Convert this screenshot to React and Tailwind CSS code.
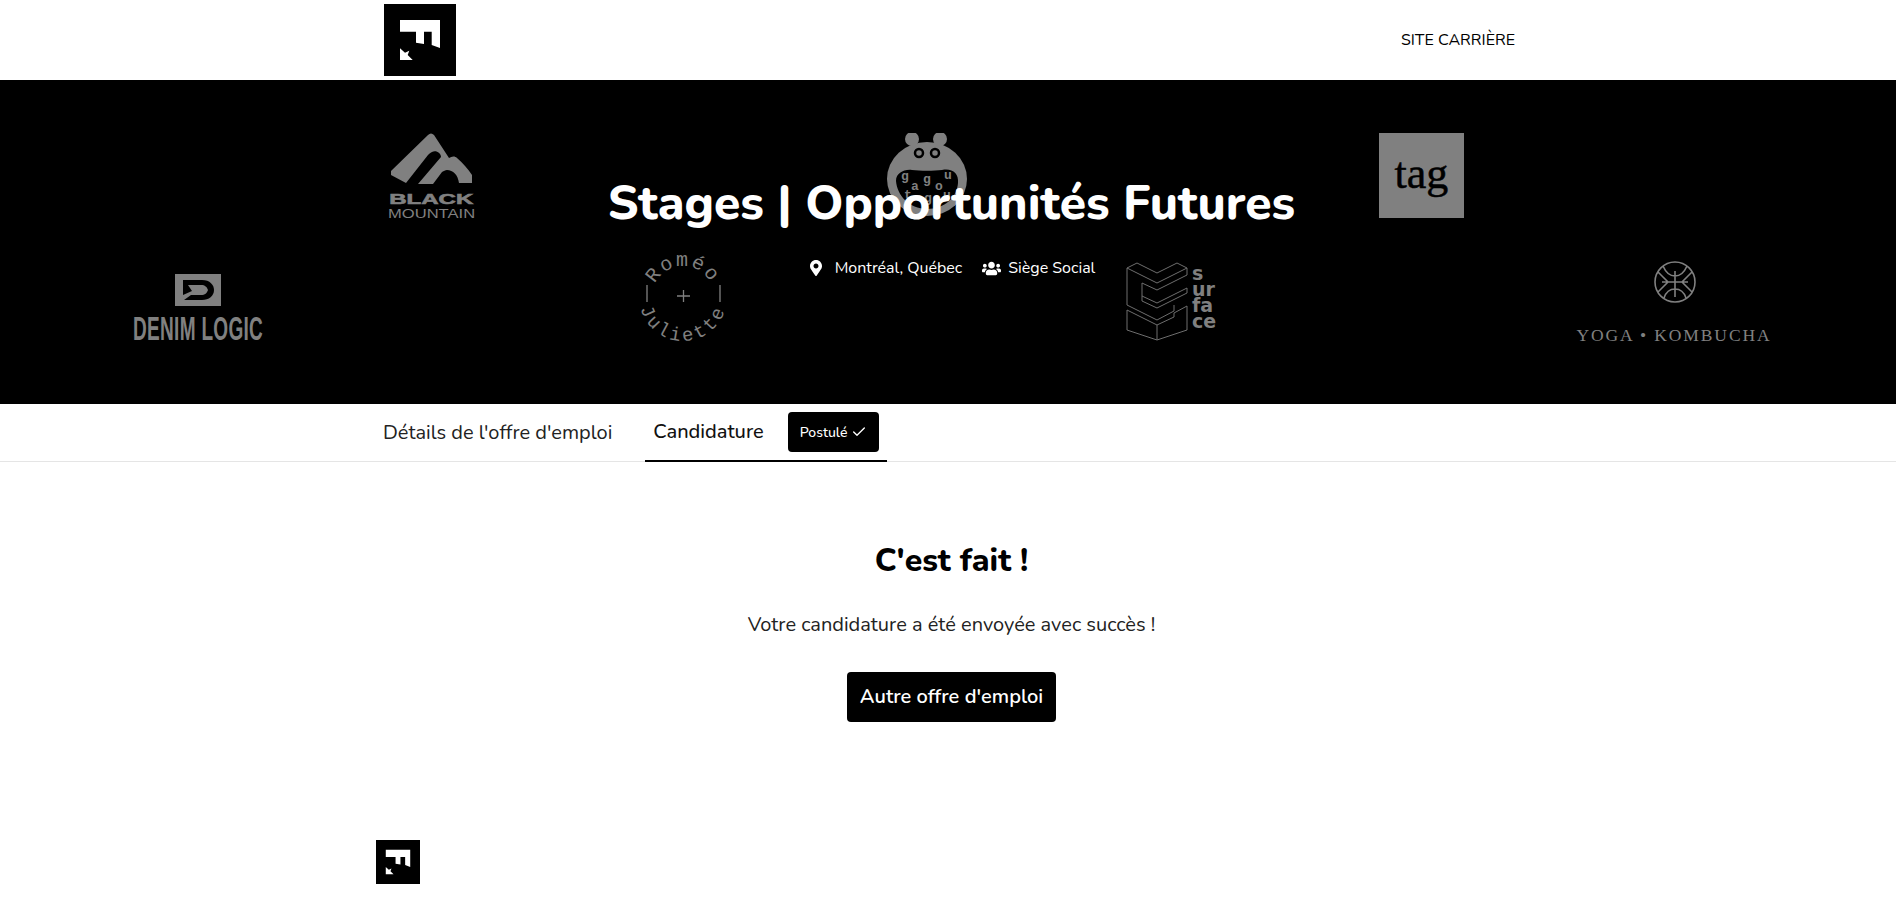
import { Check } from 'lucide-react';
import { FaMapMarkerAlt, FaUsers } from 'react-icons/fa';

const FONT = "font-['Nunito','Open_Sans','Noto_Sans',sans-serif]";

// Logo F de l'entreprise
function BrandLogo({ className }) {
  return (
    <svg viewBox="0 0 72 72" className={className}>
      <rect width="72" height="72" fill="#000" />
      <path fill="#fff" d="M16 16H56V44L47.700 41V27.700H40V40L32 38.700V27.700H16Z" />
      <path fill="#fff" d="M16 44.300L21 48.700L25.300 46.700L23.700 51L28.700 56H16Z" />
    </svg>
  );
}

function BlackMountain() {
  return (
    <div className="absolute left-[388px] top-[53px] w-[87px] flex flex-col items-center">
      <svg viewBox="0 0 81 52" className="w-[81px] h-[52px]">
        <path fill="#808080" d="M37 2C39 0 41 0 43 2L58 25C61 23 64 23 66 25C72 30 77 36 81 42V50H68C67 42 62 37 56 37C54 37 53 38 51 39L42 51H27L50 24C50 20 45 17 41 19C39 20 38 21 37 22L15 50L0 42V38Z" />
      </svg>
      <span className="mt-[7px] text-[#808080] font-['Liberation_Sans'] font-bold text-[15px] leading-[14px] [-webkit-text-stroke:0.6px_#808080] [transform:scaleX(1.6)]">BLACK</span>
      <span className="mt-[2px] text-[#808080] font-['Liberation_Sans'] text-[12px] leading-[12px] [transform:scaleX(1.38)]">MOUNTAIN</span>
    </div>
  );
}

function Hippo() {
  return (
    <svg viewBox="0 0 80 86" className="absolute left-[887px] top-[53px] w-[80px] h-[86px]">
      <circle cx="25" cy="6" r="7" fill="#808080" />
      <circle cx="53" cy="6" r="7" fill="#808080" />
      <ellipse cx="40" cy="46" rx="40" ry="37" fill="#808080" />
      <circle cx="32" cy="20" r="4" fill="none" stroke="#000" strokeWidth="2.500" />
      <circle cx="48" cy="20" r="4" fill="none" stroke="#000" strokeWidth="2.500" />
      <path fill="#000" d="M9 48C9 40 17 36 25 37C33 38 47 38 55 37C65 35 72 40 71 50C70 64 58 76 40 76C22 76 10 62 9 48Z" />
      <g fill="#808080" fontFamily="Liberation Mono" fontWeight="700" fontSize="13" textAnchor="middle">
        <text x="18" y="47">g</text>
        <text x="28" y="57">a</text>
        <text x="40" y="50">g</text>
        <text x="52" y="57">o</text>
        <text x="61" y="46">u</text>
        <text x="21" y="66">t</text>
        <text x="41" y="69">g</text>
        <text x="60" y="66">u</text>
      </g>
    </svg>
  );
}

function Tag() {
  return (
    <div className="absolute left-[1379px] top-[53px] w-[85px] h-[85px] bg-[#808080] flex items-center justify-center">
      <span className="font-['Liberation_Serif'] text-[44px] leading-none text-black -mt-[3px] [-webkit-text-stroke:0.5px_#000]">tag</span>
    </div>
  );
}

function DenimLogic() {
  return (
    <div className="absolute left-[133px] top-[194px] w-[130px] flex flex-col items-center">
      <svg viewBox="0 0 46 32" className="w-[46px] h-[32px]">
        <rect width="46" height="32" fill="#808080" />
        <path fill="#000" d="M8 6H27C35 6 39 11 39 16C39 22 34 26 27 26H9L16 21H26C30 21 32 19 33 16C32 13 30 11 26 11H13L17 17L8 21Z" />
      </svg>
      <span className="mt-[8px] font-['Liberation_Sans'] font-bold text-[#808080] text-[34px] leading-[28px] tracking-[0.5px] whitespace-nowrap [transform:scaleX(0.56)]">DENIM LOGIC</span>
    </div>
  );
}

function RomeoJuliette() {
  return (
    <svg viewBox="0 0 100 100" className="absolute left-[633px] top-[167px] w-[100px] h-[100px]">
      <defs>
        <path id="arc-top" d="M19 50A31 31 0 0 1 81 50" />
        <path id="arc-bottom" d="M6 50A44 44 0 0 0 94 50" />
      </defs>
      <g fill="#808080" fontFamily="Liberation Mono" textAnchor="middle">
        <text fontSize="20" letterSpacing="2"><textPath href="#arc-top" startOffset="50%">Roméo</textPath></text>
        <text fontSize="19" letterSpacing="3"><textPath href="#arc-bottom" startOffset="50%">Juliette</textPath></text>
      </g>
      <path stroke="#808080" strokeWidth="1.300" fill="none" d="M14 38V55M87 38V55M44 49H57M50.500 43V55" />
    </svg>
  );
}

function Surface() {
  return (
    <div className="absolute left-[1126px] top-[182px] flex items-center">
      <svg viewBox="0 0 62 80" className="w-[62px] h-[80px]">
        <g transform="translate(1 1)" fill="none" stroke="#6e6e6e" strokeWidth="1">
          <path d="M0 5L10 0L30 10L50 0L60 5L30 20Z" />
          <path d="M0 5V42L30 57L47 48V42" />
          <path d="M60 5V12L30 27L15 20V33L30 40L60 25V30L30 45L15 38V33" />
          <path d="M0 47V67L30 77L60 67V43L47 50V54L30 62L0 47" />
          <path d="M30 62V77" />
        </g>
      </svg>
      <div className="ml-[4px] -mt-[10px] font-['DejaVu_Sans'] font-bold text-[#808080] text-[19px] leading-[16px] flex flex-col">
        <span>s</span>
        <span>ur</span>
        <span>fa</span>
        <span>ce</span>
      </div>
    </div>
  );
}

function YogaKombucha() {
  return (
    <div className="absolute left-[1578px] top-[181px] w-[192px] flex flex-col items-center">
      <svg viewBox="0 0 42 42" className="w-[42px] h-[42px] translate-x-[1px]">
        <g fill="none" stroke="#808080" strokeWidth="1.600">
          <circle cx="21" cy="21" r="20" />
          <path d="M21 10V36M9 5C12 12 16 15 21 15C26 15 30 12 33 5M4 11L14 21L4 31M38 11L28 21L38 31M8 21H34M10 37C12 31 16 28 21 28C26 28 30 31 32 37" />
        </g>
      </svg>
      <span className="mt-[25px] font-['Liberation_Serif'] text-[#808080] text-[17.500px] leading-[14px] tracking-[1.900px] whitespace-nowrap">YOGA • KOMBUCHA</span>
    </div>
  );
}

export default function App() {
  return (
    <div className={`${FONT} bg-white text-[#111] h-[912px] overflow-hidden`}>
      {/* Entete */}
      <header className="h-[80px] bg-white">
        <div className="mx-auto w-[1128px] h-full flex items-center justify-between">
          <BrandLogo className="w-[72px] h-[72px]" />
          <a className="text-[16px] text-[#000] leading-6 -mt-[1px] -mr-[3px]">SITE CARRIÈRE</a>
        </div>
      </header>

      {/* Banniere */}
      <section className="relative h-[324px] bg-black overflow-hidden">
        <BlackMountain />
        <Hippo />
        <Tag />
        <DenimLogic />
        <RomeoJuliette />
        <Surface />
        <YogaKombucha />
        <div className="relative flex flex-col items-center pt-[94px] pl-[7px]">
          <h1 className="text-white font-extrabold text-[48px] leading-[58px]">Stages | Opportunités Futures</h1>
          <div className="flex items-center mt-[24px] text-white text-[16px] leading-6">
            <FaMapMarkerAlt size={16} className="mr-[11px]" />
            <span>Montréal, Québec</span>
            <FaUsers size={19} className="ml-[20px] mr-[7px]" />
            <span>Siège Social</span>
          </div>
        </div>
      </section>

      {/* Onglets */}
      <nav className="h-[58px] border-b border-[#e5e5e5]">
        <div className="mx-auto w-[1128px] h-full flex items-stretch">
          <div className="flex items-center -ml-[1px] pr-[33px] text-[20px] text-[#222]">Détails de l'offre d'emploi</div>
          <div className="flex items-center px-[8px] h-[58px] border-b-2 border-black text-[20px] font-medium text-[#111]">
            <span>Candidature</span>
            <span className="ml-[24px] h-[40px] px-[12px] bg-black rounded-[4px] text-white text-[14px] flex items-center gap-[4px]">
              Postulé <Check size={16} strokeWidth={2} />
            </span>
          </div>
        </div>
      </nav>

      {/* Confirmation */}
      <main className="flex flex-col items-center pt-[79px] pl-[7px]">
        <h2 className="text-[32px] leading-[40px] font-extrabold text-black">C'est fait !</h2>
        <p className="mt-[30px] text-[20px] leading-[28px] text-[#222]">Votre candidature a été envoyée avec succès !</p>
        <button className="mt-[33px] h-[50px] w-[209px] bg-black text-white rounded-[4px] text-[20px] font-semibold">Autre offre d'emploi</button>
      </main>

      <footer className="mx-auto w-[1128px] mt-[118px]">
        <BrandLogo className="w-[44px] h-[44px] -ml-[8px]" />
      </footer>
    </div>
  );
}
